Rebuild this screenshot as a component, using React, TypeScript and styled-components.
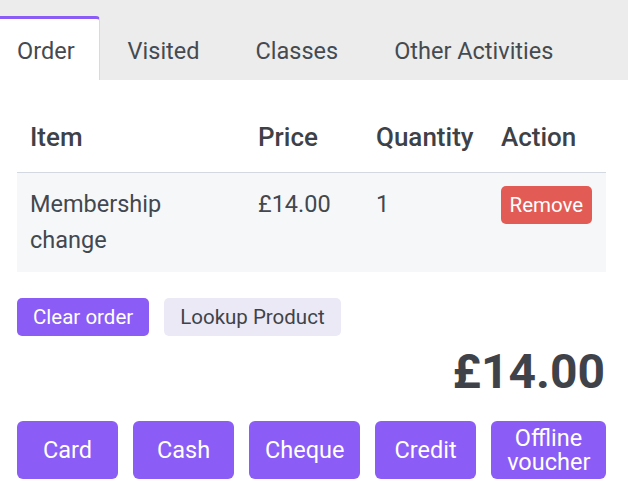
import React from "react";
import styled, { createGlobalStyle } from "styled-components";

const Global = createGlobalStyle`
  html, body { margin: 0; padding: 0; background: #fff; }
  body { font-family: Roboto, "Noto Sans", sans-serif; color: #3f4349; }
  * { box-sizing: border-box; }
`;

const Page = styled.div`
  width: 628px;
`;

const TabBar = styled.div`
  display: flex;
  align-items: flex-end;
  height: 80px;
  background: #ececec;
`;

const Tab = styled.div<{ $active?: boolean; $first?: boolean }>`
  height: 64px;
  display: flex;
  align-items: center;
  padding: ${(p) => (p.$first ? "3px 24px 0 17px" : "3px 27px 0 28px")};
  font-size: 23.5px;
  color: #454a51;
  background: ${(p) => (p.$active ? "#fff" : "transparent")};
  border-top: 3px solid ${(p) => (p.$active ? "#8b5cf6" : "transparent")};
  border-right: 1px solid ${(p) => (p.$active ? "#d9d9de" : "transparent")};
  border-top-right-radius: ${(p) => (p.$active ? "4px" : "0")};
`;

const Content = styled.div`
  padding: 27px 22px 0 17px;
`;

const Table = styled.table`
  width: 589px;
  border-collapse: collapse;
  table-layout: fixed;
`;

const Th = styled.th<{ $w: number }>`
  width: ${(p) => p.$w}px;
  text-align: left;
  font-size: 26px;
  font-weight: 500;
  line-height: 39px;
  padding: 11px 13px 15px;
  color: #3d4148;
  border-bottom: 1px solid #d4d9e1;
`;

const Row = styled.tr`
  background: #f6f7f9;
`;

const Td = styled.td`
  vertical-align: top;
  font-size: 23.5px;
  line-height: 36px;
  padding: 13px 13px 14px;
  color: #43474e;
`;

const SmallButton = styled.button<{ $variant: "danger" | "primary" | "soft" }>`
  font-family: Roboto, sans-serif;
  font-size: 20.5px;
  line-height: 30px;
  height: 38px;
  border: none;
  border-radius: 5px;
  padding: 0 ${(p) => (p.$variant === "danger" ? "8.5px" : "16px")};
  background: ${(p) =>
    p.$variant === "danger" ? "#e25c55" : p.$variant === "primary" ? "#8b5cf6" : "#ece9f6"};
  color: ${(p) => (p.$variant === "soft" ? "#3f4349" : "#fff")};
  cursor: pointer;
`;

const Actions = styled.div`
  display: flex;
  gap: 15px;
  margin-top: 26px;
`;

const Total = styled.div`
  text-align: right;
  font-size: 48px;
  font-weight: 700;
  line-height: 60px;
  color: #3f4349;
  margin-top: 6px;
  padding-right: 1px;
`;

const PayRow = styled.div`
  display: flex;
  gap: 15px;
  margin-top: 19px;
`;

const PayButton = styled.button`
  font-family: Roboto, sans-serif;
  min-width: 101px;
  height: 58px;
  padding: 0 16px;
  font-size: 23.5px;
  line-height: 24px;
  border: none;
  border-radius: 6px;
  background: #8b5cf6;
  color: #fff;
  cursor: pointer;
`;

export default function App() {
  return (
    <Page>
      <Global />
      <TabBar>
        <Tab $active $first>Order</Tab>
        <Tab>Visited</Tab>
        <Tab>Classes</Tab>
        <Tab>Other Activities</Tab>
      </TabBar>
      <Content>
        <Table>
          <thead>
            <tr>
              <Th $w={228}>Item</Th>
              <Th $w={118}>Price</Th>
              <Th $w={125}>Quantity</Th>
              <Th $w={118}>Action</Th>
            </tr>
          </thead>
          <tbody>
            <Row>
              <Td>Membership change</Td>
              <Td>£14.00</Td>
              <Td>1</Td>
              <Td>
                <SmallButton $variant="danger">Remove</SmallButton>
              </Td>
            </Row>
          </tbody>
        </Table>
        <Actions>
          <SmallButton $variant="primary">Clear order</SmallButton>
          <SmallButton $variant="soft">Lookup Product</SmallButton>
        </Actions>
        <Total>£14.00</Total>
        <PayRow>
          <PayButton>Card</PayButton>
          <PayButton>Cash</PayButton>
          <PayButton>Cheque</PayButton>
          <PayButton>Credit</PayButton>
          <PayButton>Offline<br />voucher</PayButton>
        </PayRow>
      </Content>
    </Page>
  );
}
